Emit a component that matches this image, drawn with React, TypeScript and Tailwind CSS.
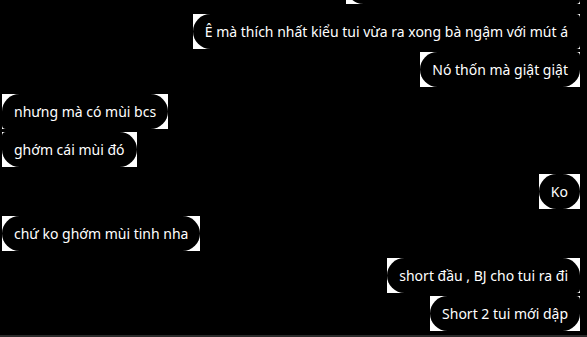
import React from 'react';

// Tin nhắn: bên trái / phải, vị trí trong nhóm
type Side = 'l' | 'r';
type Pos = 'single' | 'first' | 'middle' | 'last';

interface Msg {
  side: Side;
  pos: Pos;
  text: string;
  gap?: string;
}

const messages: Msg[] = [
  { side: 'r', pos: 'first', text: 'Vậy mà cũng chịu được hả trời ạ' },
  { side: 'r', pos: 'middle', text: 'Ê mà thích nhất kiểu tui vừa ra xong bà ngậm với mút á', gap: 'mt-[10px]' },
  { side: 'r', pos: 'last', text: 'Nó thốn mà giật giật' },
  { side: 'l', pos: 'first', text: 'nhưng mà có mùi bcs' },
  { side: 'l', pos: 'last', text: 'ghớm cái mùi đó' },
  { side: 'r', pos: 'single', text: 'Ko' },
  { side: 'l', pos: 'single', text: 'chứ ko ghớm mùi tinh nha' },
  { side: 'r', pos: 'first', text: 'short đầu , BJ cho tui ra đi' },
  { side: 'r', pos: 'last', text: 'Short 2 tui mới dập' },
];

// bo góc theo nhóm (giống Messenger)
const radius: Record<Side, Record<Pos, string>> = {
  r: {
    single: 'rounded-[18px]',
    first: 'rounded-tl-[18px] rounded-tr-[18px] rounded-br-[4px] rounded-bl-[18px]',
    middle: 'rounded-tl-[18px] rounded-tr-[4px] rounded-br-[4px] rounded-bl-[18px]',
    last: 'rounded-tl-[18px] rounded-tr-[4px] rounded-br-[18px] rounded-bl-[18px]',
  },
  l: {
    single: 'rounded-[18px]',
    first: 'rounded-tl-[18px] rounded-tr-[18px] rounded-br-[18px] rounded-bl-[4px]',
    middle: 'rounded-tl-[4px] rounded-tr-[18px] rounded-br-[18px] rounded-bl-[4px]',
    last: 'rounded-tl-[4px] rounded-tr-[18px] rounded-br-[18px] rounded-bl-[18px]',
  },
};

const Bubble: React.FC<{ msg: Msg }> = ({ msg }) => {
  const gap = msg.gap ?? (msg.pos === 'single' || msg.pos === 'first' ? 'mt-[7px]' : 'mt-[3px]');
  return (
    <div className={`flex ${msg.side === 'r' ? 'justify-end' : 'justify-start'} ${gap}`}>
      <div className="bg-white">
        <div className={`bg-black text-white px-3 py-[7px] text-[14px] leading-[21px] ${radius[msg.side][msg.pos]}`}>
          {msg.text}
        </div>
      </div>
    </div>
  );
};

export default function App() {
  return (
    <div className="w-[587px] h-[337px] bg-black flex flex-col overflow-hidden" style={{ fontFamily: '"Noto Sans", sans-serif' }}>
      <div className="flex-1 min-h-0 flex flex-col justify-end overflow-hidden pl-[2px] pr-[7px] pb-[4px]">
        {messages.map((m, i) => (
          <Bubble key={i} msg={m} />
        ))}
      </div>
      {/* thanh dưới */}
      <div className="h-[2px] bg-[#2b2b2b]" />
    </div>
  );
}
